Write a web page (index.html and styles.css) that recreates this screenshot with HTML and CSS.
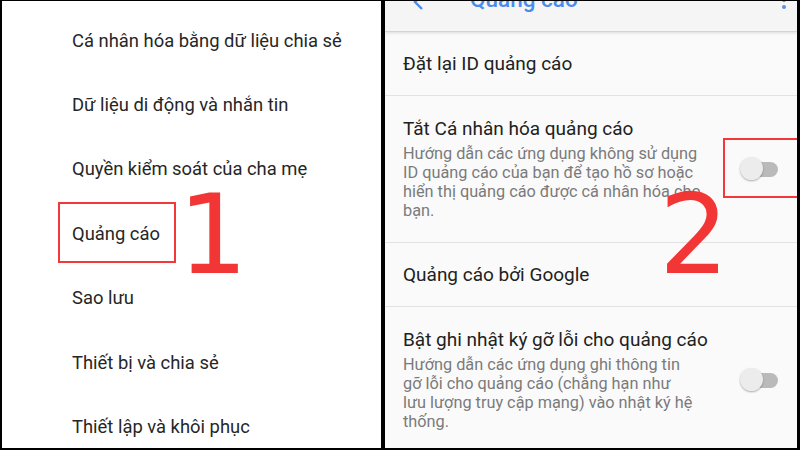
FILE: index.html
```html
<!DOCTYPE html>
<html lang="vi">
<head>
<meta charset="utf-8">
<link rel="stylesheet" href="styles.css">
</head>
<body>
<div class="frame">
  <div class="left">
    <div class="litem">Cá nhân hóa bằng dữ liệu chia sẻ</div>
    <div class="litem">Dữ liệu di động và nhắn tin</div>
    <div class="litem">Quyền kiểm soát của cha mẹ</div>
    <div class="litem">Quảng cáo</div>
    <div class="litem">Sao lưu</div>
    <div class="litem">Thiết bị và chia sẻ</div>
    <div class="litem">Thiết lập và khôi phục</div>
    <div class="mark mark1"></div>
    <div class="num num1">1</div>
  </div>
  <div class="right">
    <div class="header">
      <svg class="back" width="12" height="20" viewBox="0 0 12 20"><path d="M10 0 L3 7 L10 14" fill="none" stroke="#4b8bec" stroke-width="2.4"/></svg>
      <div class="title">Quảng cáo</div>
      <div class="dots"><span></span><span></span><span></span></div>
    </div>
    <div class="row single"><div class="rtitle">Đặt lại ID quảng cáo</div></div>
    <div class="row multi">
      <div class="rtext">
        <div class="rtitle">Tắt Cá nhân hóa quảng cáo</div>
        <div class="rdesc">Hướng dẫn các ứng dụng không sử dụng<br>ID quảng cáo của bạn để tạo hồ sơ hoặc<br>hiển thị quảng cáo được cá nhân hóa cho<br>bạn.</div>
      </div>
      <div class="toggle"><div class="track"></div><div class="thumb"></div></div>
    </div>
    <div class="row single"><div class="rtitle">Quảng cáo bởi Google</div></div>
    <div class="row multi last">
      <div class="rtext">
        <div class="rtitle">Bật ghi nhật ký gỡ lỗi cho quảng cáo</div>
        <div class="rdesc">Hướng dẫn các ứng dụng ghi thông tin<br>gỡ lỗi cho quảng cáo (chẳng hạn như<br>lưu lượng truy cập mạng) vào nhật ký hệ<br>thống.</div>
      </div>
      <div class="toggle"><div class="track"></div><div class="thumb"></div></div>
    </div>
    <div class="mark mark2"></div>
    <div class="num num2">2</div>
  </div>
</div>
</body>
</html>
```
FILE: styles.css
```css
html, body { margin: 0; padding: 0; }
body { width: 800px; height: 450px; overflow: hidden; background: #000; }
.frame {
  width: 800px; height: 450px; box-sizing: border-box;
  background: #000; display: flex; gap: 4px;
  padding: 1px 3px 2px 2px;
}
.left {
  position: relative;
  width: 379px; flex: none; background: #fff;
  padding-top: 7px; box-sizing: border-box;
  font-family: Roboto, "Noto Sans", sans-serif;
  overflow: hidden;
}
.litem {
  height: 64.4px; display: flex; align-items: center;
  padding-left: 70px; font-size: 18.4px; color: #262626;
}
.right {
  position: relative;
  flex: 1; background: #fafafa; overflow: hidden;
  font-family: Roboto, "Noto Sans", sans-serif;
}
.header {
  height: 30px; background: #f5f5f5;
  border-bottom: 1px solid #d4d4d4;
  box-shadow: 0 1px 3px rgba(0,0,0,0.12);
  display: flex; align-items: flex-start;
  position: relative; z-index: 1;
  overflow: hidden;
}
.back { margin-left: 27px; margin-top: -6px; flex: none; }
.title {
  margin-left: 46px; margin-top: -17px;
  font-size: 22.5px; font-weight: 500; color: #4b8bec; line-height: 30px;
  flex: 1;
}
.dots {
  display: flex; flex-direction: column; gap: 3px;
  margin-right: 11px; margin-top: -10px;
}
.dots span { width: 4px; height: 4px; border-radius: 50%; background: #5b8fe0; }
.row {
  border-bottom: 1px solid #e2e2e2;
  padding-left: 18px; padding-right: 19px;
  display: flex; align-items: center;
}
.row.single { height: 63px; }
.row.multi { padding-top: 21px; padding-bottom: 22px; }
.rtext { flex: 1; }
.rtitle { font-size: 19px; line-height: 24px; color: #212121; }
.rdesc { margin-top: 3px; font-size: 16.3px; line-height: 19px; color: #7a7a7a; }
.toggle { position: relative; width: 38px; height: 24px; flex: none; }
.track {
  position: absolute; right: 0; top: 5px; width: 32px; height: 15px;
  border-radius: 8px; background: #bababa;
}
.thumb {
  position: absolute; left: 0; top: 0; width: 23px; height: 23px;
  border-radius: 50%; background: #ececec;
  box-shadow: 0 1px 2px rgba(0,0,0,0.3);
}
.mark {
  position: absolute; border: 2px solid #f23838; box-sizing: border-box;
}
.mark1 { left: 56px; top: 201px; width: 118px; height: 61px; }
.mark2 { left: 338px; top: 137px; width: 76px; height: 60px; }
.num {
  position: absolute; font-family: "DejaVu Sans", sans-serif;
  font-size: 110px; line-height: 82px; color: #f23535;
}
.num1 { left: 176px; top: 193px; }
.num2 { left: 274px; top: 193px; }
```
